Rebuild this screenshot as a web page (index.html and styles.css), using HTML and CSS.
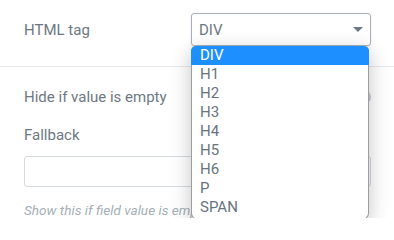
FILE: index.html
```html
<!DOCTYPE html>
<html>
<head>
<meta charset="utf-8">
<link rel="stylesheet" href="styles.css">
</head>
<body>
<div class="panel">
  <div class="row row-tag">
    <div class="label">HTML tag</div>
    <div class="select-wrap">
      <div class="select">
        <span>DIV</span>
        <span class="caret"></span>
      </div>
      <ul class="dropdown">
        <li class="active">DIV</li>
        <li>H1</li>
        <li>H2</li>
        <li>H3</li>
        <li>H4</li>
        <li>H5</li>
        <li>H6</li>
        <li>P</li>
        <li>SPAN</li>
      </ul>
    </div>
  </div>
  <div class="section">
    <div class="row row-hide">
      <div class="label">Hide if value is empty</div>
      <div class="toggle"></div>
    </div>
    <div class="label fallback">Fallback</div>
    <div class="input"></div>
    <div class="hint">Show this if field value is empty</div>
  </div>
</div>
</body>
</html>
```
FILE: styles.css
```css
html, body {
  margin: 0;
  background: #ffffff;
}
body {
  font-family: Roboto, "Liberation Sans", sans-serif;
  color: #6d7882;
  overflow: hidden;
}
.panel {
  position: relative;
}
.row {
  display: flex;
  align-items: center;
}
.row-tag {
  padding: 13px 23px 20px 24px;
  border-bottom: 1px solid #e6e9ec;
}
.label {
  flex: 1;
  font-size: 15px;
  line-height: 18px;
}
.select-wrap {
  position: relative;
  width: 180px;
}
.select {
  box-sizing: border-box;
  height: 33px;
  border: 1px solid #a9b1b8;
  border-radius: 3px;
  display: flex;
  align-items: center;
  justify-content: space-between;
  padding: 0 7px 0 7px;
  font-size: 15px;
  line-height: 18px;
  box-shadow: 0 1px 3px rgba(0, 0, 0, 0.08);
}
.caret {
  width: 0;
  height: 0;
  border-left: 5px solid transparent;
  border-right: 5px solid transparent;
  border-top: 5px solid #6d7882;
}
.dropdown {
  position: absolute;
  top: 33px;
  left: 0;
  width: 178px;
  box-sizing: border-box;
  margin: 0;
  padding: 0 0 2px 0;
  list-style: none;
  background: #ffffff;
  border: 1px solid #9a9ea3;
  border-top: none;
  border-radius: 5px 5px 7px 7px;
  box-shadow: 0 5px 20px rgba(0, 0, 0, 0.24);
  z-index: 5;
}
.dropdown li {
  height: 19px;
  line-height: 19px;
  font-size: 15px;
  padding-left: 8px;
  color: #68737d;
}
.dropdown li.active {
  background: #1e8fff;
  color: #ffffff;
  border-radius: 5px 5px 0 0;
  margin: 0 -1px;
  padding-left: 9px;
}
.section {
  padding: 21px 23px 0 24px;
}
.toggle {
  width: 40px;
  height: 14px;
  border-radius: 8px;
  background: #c8cdd2;
}
.fallback {
  margin-top: 20px;
}
.input {
  box-sizing: border-box;
  margin-top: 12px;
  height: 31px;
  border: 1px solid #d5dadf;
  border-radius: 3px;
}
.hint {
  margin-top: 15px;
  font-size: 13.6px;
  line-height: 16px;
  font-style: italic;
  color: #a4afb7;
  white-space: nowrap;
}
```
